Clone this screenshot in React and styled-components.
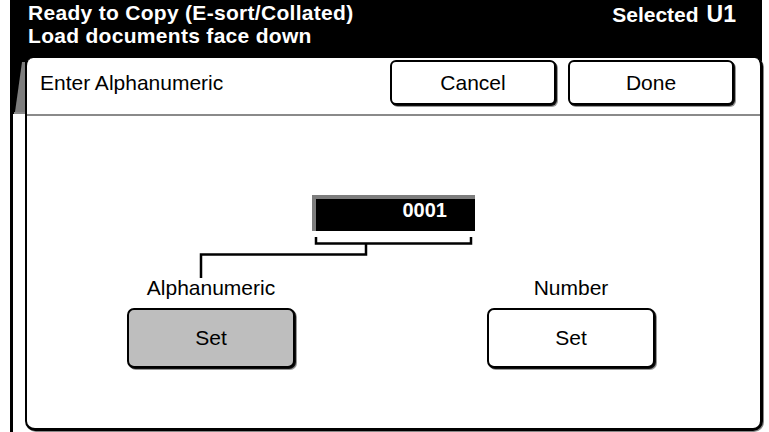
import styled, { createGlobalStyle } from "styled-components";

const GlobalStyle = createGlobalStyle`
  html, body {
    margin: 0;
    padding: 0;
    background: #fff;
  }
  body {
    font-family: "Liberation Sans", Arial, Helvetica, sans-serif;
    color: #000;
  }
`;

export default function App() {
  return (
    <>
      <GlobalStyle />
      <Page>
        <Screen>
          <StatusBar>
            <StatusLines>
              <span>Ready to Copy (E-sort/Collated)</span>
              <span>Load documents face down</span>
            </StatusLines>
            <Selected>
              Selected <b>U1</b>
            </Selected>
          </StatusBar>

          <Body>
            <Gutter>
              {/* bevelled edge of the tab */}
              <svg width="12" height="56" viewBox="0 0 12 56">
                <rect width="12" height="56" fill="#000" />
                <polygon points="9,4 12,4 12,54 2,54" fill="#7d7d7d" />
                <rect x="1" y="54" width="11" height="2" fill="#8a8a8a" />
              </svg>
            </Gutter>

            <Panel>
              <PanelHead>
                <Title>Enter Alphanumeric</Title>
                <HeadButtons>
                  <Key>Cancel</Key>
                  <Key>Done</Key>
                </HeadButtons>
              </PanelHead>

              <PanelBody>
                <Field>0001</Field>
                <Connector width="733" height="47" viewBox="0 0 733 47">
                  <path
                    d="M289 6 V12.5 H444 V6"
                    fill="none"
                    stroke="#000"
                    strokeWidth="2.5"
                  />
                  <path
                    d="M339 12.5 V23.5 H174 V47"
                    fill="none"
                    stroke="#000"
                    strokeWidth="2.5"
                  />
                </Connector>
                <Options>
                  <Option>
                    <OptionLabel>Alphanumeric</OptionLabel>
                    <SetButton $active>Set</SetButton>
                  </Option>
                  <Option>
                    <OptionLabel>Number</OptionLabel>
                    <SetButton>Set</SetButton>
                  </Option>
                </Options>
              </PanelBody>
            </Panel>
          </Body>
        </Screen>
      </Page>
    </>
  );
}

// STYLED COMPONENTS
const Page = styled.div`
  width: 769px;
  height: 432px;
  padding-left: 10px;
  box-sizing: border-box;
  overflow: hidden;
`;

const Screen = styled.div`
  width: 752px;
  height: 432px;
  display: flex;
  flex-direction: column;
  border-left: 3px solid #000;
  box-sizing: border-box;
`;

const StatusBar = styled.div`
  height: 58px;
  flex-shrink: 0;
  background: #000;
  color: #fff;
  display: flex;
  justify-content: space-between;
  align-items: flex-start;
  padding: 1px 0 0 15px;
  box-sizing: border-box;
`;

const StatusLines = styled.div`
  display: flex;
  flex-direction: column;
  font-size: 21px;
  font-weight: bold;
  line-height: 23px;
  letter-spacing: 0.3px;
`;

const Selected = styled.div`
  display: flex;
  align-items: baseline;
  gap: 8px;
  font-size: 21px;
  font-weight: bold;
  line-height: 26px;
  padding-right: 26px;
  b {
    font-size: 23px;
  }
`;

const Body = styled.div`
  flex: 1;
  display: flex;
  background: linear-gradient(#000 0 9px, #fff 9px);
`;

const Gutter = styled.div`
  width: 12px;
  flex-shrink: 0;
  background: #fff;
  svg {
    display: block;
  }
`;

const Panel = styled.div`
  flex: 1;
  display: flex;
  flex-direction: column;
  background: #fff;
  border: 2px solid #000;
  border-top: none;
  border-right-width: 3px;
  border-bottom-width: 3px;
  border-radius: 8px 8px 10px 10px;
  box-shadow: 1px 1px 0 #888;
  margin-bottom: 1px;
`;

const PanelHead = styled.div`
  height: 54px;
  flex-shrink: 0;
  display: flex;
  align-items: flex-start;
  justify-content: space-between;
  padding: 2px 26px 0 13px;
  border-bottom: 2px solid #8a8a8a;
`;

const Title = styled.div`
  font-size: 21px;
  line-height: 24px;
  padding-top: 11px;
`;

const HeadButtons = styled.div`
  display: flex;
  gap: 12px;
`;

const Key = styled.button`
  width: 166px;
  height: 45px;
  background: #fff;
  border: 2px solid #000;
  border-radius: 6px;
  box-shadow: 1px 1px 0 #111, 2px 2px 0 #999;
  font-family: inherit;
  font-size: 21px;
  color: #000;
  padding: 0;
`;

const PanelBody = styled.div`
  flex: 1;
  display: flex;
  flex-direction: column;
  align-items: center;
  padding-top: 79px;
`;

const Field = styled.div`
  width: 163px;
  height: 36px;
  box-sizing: border-box;
  background: #000;
  border-top: 4px solid #7d7d7d;
  border-left: 4px solid #7d7d7d;
  color: #fff;
  font-size: 20px;
  font-weight: bold;
  line-height: 22px;
  text-align: right;
  padding-right: 28px;
`;

const Connector = styled.svg`
  display: block;
  flex-shrink: 0;
`;

const Options = styled.div`
  align-self: stretch;
  display: flex;
  justify-content: space-between;
  padding: 0 105px 0 100px;
`;

const Option = styled.div`
  display: flex;
  flex-direction: column;
  align-items: center;
  gap: 8px;
`;

const OptionLabel = styled.div`
  font-size: 21px;
  line-height: 24px;
  margin-top: -2px;
`;

const SetButton = styled.button`
  width: 168px;
  height: 60px;
  background: ${(p) => (p.$active ? "#bebebe" : "#fff")};
  border: 2px solid #000;
  border-radius: 7px;
  box-shadow: 1px 1px 0 #111, 2px 2px 0 #999;
  font-family: inherit;
  font-size: 21px;
  color: #000;
  padding: 0;
`;
